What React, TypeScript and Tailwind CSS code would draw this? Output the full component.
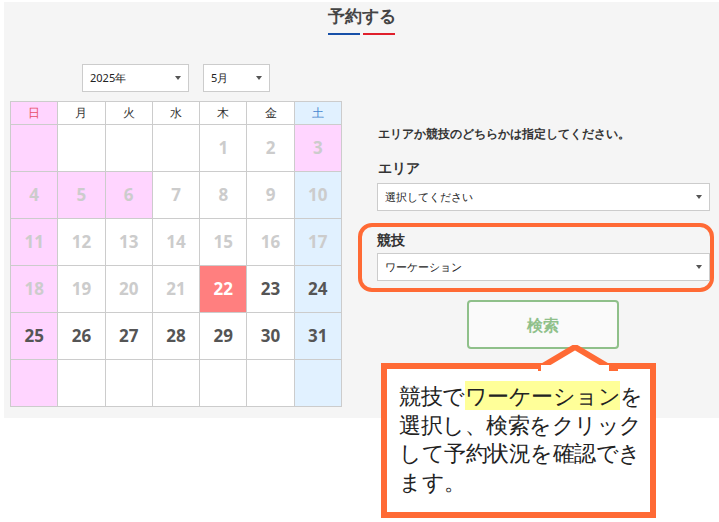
const days: (number | null)[] = [
  null, null, null, null, 1, 2, 3,
  4, 5, 6, 7, 8, 9, 10,
  11, 12, 13, 14, 15, 16, 17,
  18, 19, 20, 21, 22, 23, 24,
  25, 26, 27, 28, 29, 30, 31,
  null, null, null, null, null, null, null,
];
const heads = ['日', '月', '火', '水', '木', '金', '土'];
const holidays = [3, 4, 5, 6];

function Caret() {
  return <span className="ml-auto h-0 w-0 border-x-[3px] border-t-[4px] border-x-transparent border-t-[#555]" />;
}

function Select({ label, className }: { label: string; className: string }) {
  return (
    <div className={`flex h-[28px] items-center border border-[#ccc] bg-white px-[7px] text-[11px] text-[#222] ${className}`}>
      <span>{label}</span>
      <Caret />
    </div>
  );
}

export default function App() {
  return (
    <div className="relative h-[522px] w-[719px] bg-white font-['Noto_Sans_CJK_JP',sans-serif]">
      <div className="ml-[4px] mt-[2px] h-[416px] bg-[#f5f5f5] pt-[3px]">
        <div className="flex flex-col items-center">
          <h1 className="text-[17px] font-bold leading-[22px] text-[#444]">予約する</h1>
          <div className="mt-[6px] flex gap-[3px]">
            <span className="h-[2px] w-[32px] bg-[#1750a8]" />
            <span className="h-[2px] w-[32px] bg-[#e0202c]" />
          </div>
        </div>
        <div className="flex">
          <div className="ml-[6px] w-[332px]">
            <div className="ml-[72px] mt-[29px] flex gap-[14px]">
              <Select label="2025年" className="w-[107px] font-['Liberation_Sans','Noto_Sans_CJK_JP',sans-serif]" />
              <Select label="5月" className="w-[67px] font-['Liberation_Sans','Noto_Sans_CJK_JP',sans-serif]" />
            </div>
            <div className="mt-[9px] grid grid-cols-7 border-l border-t border-[#ccc]">
              {heads.map((h, i) => (
                <div
                  key={h}
                  className={`flex h-[23px] items-center justify-center border-b border-r border-[#ccc] text-[12px] ${
                    i === 0 ? 'bg-[#ffd5ff] text-[#e8506a]' : i === 6 ? 'bg-[#e1f1ff] text-[#4a88d0]' : 'bg-white text-[#333]'
                  }`}
                >
                  {h}
                </div>
              ))}
              {days.map((d, i) => {
                const col = i % 7;
                const red = col === 0 || (d !== null && holidays.includes(d));
                const today = d === 22;
                const bg = today ? 'bg-[#ff7f7f]' : red ? 'bg-[#ffd5ff]' : col === 6 ? 'bg-[#e1f1ff]' : 'bg-white';
                const color = today ? 'text-white' : d !== null && d > 22 ? 'text-[#555]' : 'text-[#ccc]';
                return (
                  <div
                    key={i}
                    className={`flex h-[47px] items-center justify-center border-b border-r border-[#ccc] font-['Open_Sans',sans-serif] text-[17px] font-bold ${bg} ${color}`}
                  >
                    {d}
                  </div>
                );
              })}
            </div>
          </div>
          <div className="ml-[16px] mt-[90px] w-[356px]">
            <p className="ml-[20px] text-[12px] font-bold text-[#333]">エリアか競技のどちらかは指定してください。</p>
            <p className="ml-[20px] mt-[14px] text-[14px] font-bold text-[#333]">エリア</p>
            <Select label="選択してください" className="ml-[19px] mt-[5px] w-[333px]" />
            <div className="mt-[12px] rounded-[14px] border-[4px] border-[#ff6a35] px-[15px] pb-[7px] pt-[2px]">
              <p className="text-[14px] font-bold text-[#333]">競技</p>
              <Select label="ワーケーション" className="mt-[3px] w-[333px]" />
            </div>
            <button className="ml-[109px] mt-[8px] h-[49px] w-[152px] rounded-[4px] border-2 border-[#8fc08a] bg-[#fafafa] text-[16px] font-bold text-[#8fc08a]">
              検索
            </button>
          </div>
        </div>
      </div>
      <div className="absolute left-[381px] top-[361px] h-[155px] w-[275px] border-[6px] border-[#ff6a35] bg-white pl-[12px] pr-[4px] pt-[13px] font-['Noto_Sans_CJK_JP',sans-serif] text-[21.5px] leading-[28.5px] tracking-[-0.5px] text-[#222]">
        競技で<span className="bg-[#ffff99]">ワーケーション</span>を選択し、検索をクリックして予約状況を確認できます。
      </div>
      <svg className="absolute left-[538px] top-[343px]" width="80" height="26" viewBox="0 0 80 26">
        <polygon points="0,24 37,2 74,24" fill="white" stroke="#ff6a35" strokeWidth="6" strokeLinejoin="miter" />
        <rect x="3" y="20" width="68" height="6" fill="white" />
      </svg>
    </div>
  );
}
